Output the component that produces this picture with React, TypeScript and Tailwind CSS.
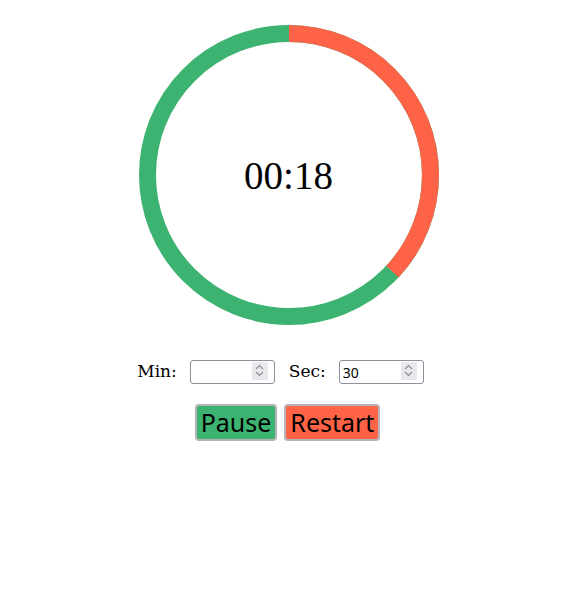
const R = 141.5;
const C = 2 * Math.PI * R;

const Spinner = () => (
    <div className="absolute right-[7px] top-[2px] w-[16px] h-[18px] bg-[#e9e9ed] flex flex-col items-center justify-center gap-[1px]">
        <svg width="9" height="6" viewBox="0 0 9 6">
            <path d="M1 5 L4.5 1.5 L8 5" fill="none" stroke="#8c8c94" strokeWidth="1.2" />
        </svg>
        <svg width="9" height="6" viewBox="0 0 9 6">
            <path d="M1 1 L4.5 4.5 L8 1" fill="none" stroke="#8c8c94" strokeWidth="1.2" />
        </svg>
    </div>
);

const NumberField = ({ value }: { value?: string }) => (
    <div className="relative w-[85px] h-[24px]">
        <input
            type="text"
            defaultValue={value}
            className="w-full h-full border border-[#8f8f9d] rounded-[3px] pl-[3px] pr-[26px] text-[14px] font-['Noto_Sans',sans-serif] outline-none"
        />
        <Spinner />
    </div>
);

export default function App() {
    const elapsed = 133 / 360;

    return (
        <div className="flex flex-col items-center pt-[25px] text-black">
            {/* ring */}
            <div className="relative w-[300px] h-[300px]">
                <svg width="300" height="300" viewBox="0 0 300 300">
                    <circle cx="150" cy="150" r={R} fill="none" stroke="#3cb371" strokeWidth="17" />
                    <circle
                        cx="150"
                        cy="150"
                        r={R}
                        fill="none"
                        stroke="#ff6347"
                        strokeWidth="17"
                        strokeDasharray={`${C * elapsed} ${C}`}
                        transform="rotate(-90 150 150)"
                    />
                </svg>
                <div className="absolute inset-0 flex items-center justify-center pt-[2px] text-[39px] font-['Liberation_Serif',serif]">
                    00:18
                </div>
            </div>

            {/* inputs */}
            <div className="flex items-center mt-[34px] mr-[16px] text-[17px] font-['DejaVu_Serif',serif]">
                <label className="mr-[13px]">Min:</label>
                <NumberField />
                <label className="ml-[14px] mr-[13px]">Sec:</label>
                <NumberField value="30" />
            </div>

            {/* buttons */}
            <div className="flex items-center gap-[7px] mt-[19px] mr-[2px] font-['Noto_Sans',sans-serif] text-[25px] leading-[33px]">
                <button className="px-[4px] bg-[#3cb371] border-2 border-[#b4b4b4] rounded-[4px]">
                    Pause
                </button>
                <button className="px-[4px] bg-[#ff6347] border-2 border-[#b4b4b4] rounded-[4px]">
                    Restart
                </button>
            </div>
        </div>
    );
}
